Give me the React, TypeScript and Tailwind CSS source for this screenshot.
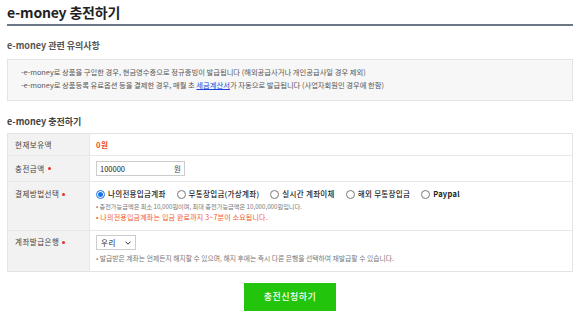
import React from "react";

const font = { fontFamily: "'Noto Sans CJK KR', 'Noto Sans', sans-serif" };

function Radio({ checked, label, bold }: { checked?: boolean; label: string; bold?: boolean }) {
  return (
    <label className="flex items-center gap-[3px]">
      {checked ? (
        <span className="flex h-[9px] w-[9px] items-center justify-center rounded-full border border-[#1a73e8] bg-white">
          <span className="h-[5px] w-[5px] rounded-full bg-[#1a73e8]" />
        </span>
      ) : (
        <span className="h-[9px] w-[9px] rounded-full border border-[#777] bg-white" />
      )}
      <span className={`text-[7.5px] tracking-[0.3px] text-[#222] ${bold ? "font-bold" : "font-medium"}`}>{label}</span>
    </label>
  );
}

function Req() {
  return <span className="ml-[3px] inline-block h-[3px] w-[3px] rounded-full bg-[#e8322a] align-middle" />;
}

export default function App() {
  return (
    <div className="h-[316px] w-[580px] bg-white px-[7px] pt-[3px]" style={font}>
      <div className="border-b-2 border-[#6b7686] pb-[2px]">
        <h1 className="text-[14px] font-bold leading-[19px] tracking-[-0.2px] text-[#222]">e-money 충전하기</h1>
      </div>

      <h2 className="mt-[14px] text-[9px] font-bold leading-[12px] text-[#555]">e-money 관련 유의사항</h2>
      <div className="mt-[7px] border border-[#e3e3e3] bg-[#f7f7f7] pl-[13px] pb-[8px] pt-[6px] text-[7.3px] leading-[13px] text-[#555]">
        <p>-e-money로 상품을 구입한 경우, 현금영수증으로 정규증빙이 발급됩니다 (해외공급사거나 개인공급사일 경우 제외)</p>
        <p>
          -e-money로 상품등록 유료옵션 등을 결제한 경우, 매월 초 <span className="text-[#2343d8] underline">세금계산서</span>가 자동으로 발급됩니다 (사업자회원인 경우에 한함)
        </p>
      </div>

      <h2 className="mt-[15px] text-[9px] font-bold leading-[12px] text-[#444]">e-money 충전하기</h2>
      <div className="mt-[5px] grid grid-cols-[82px_1fr] border border-[#e3e3e3] text-[7.5px] tracking-[0.5px] text-[#444]">
        <div className="flex h-[22px] items-center border-b border-r border-[#e8e8e8] bg-[#f2f2f2] pl-[7px]">현재보유액</div>
        <div className="flex h-[22px] items-center border-b border-[#e8e8e8] pl-[6px] font-bold text-[#f04a1d]">0원</div>

        <div className="flex h-[26px] items-center border-b border-r border-[#e8e8e8] bg-[#f2f2f2] pl-[7px]">
          충전금액<Req />
        </div>
        <div className="flex h-[26px] items-center border-b border-[#e8e8e8] pl-[6px]">
          <div className="flex h-[15px] w-[89px] items-center justify-between border border-[#ccc] px-[3px] text-[7.5px] tracking-normal text-[#222]">
            <span>100000</span>
            <span className="text-[#444]">원</span>
          </div>
        </div>

        <div className="h-[49px] border-b border-r border-[#e8e8e8] bg-[#f2f2f2] pl-[7px] pt-[6px] leading-[12px]">
          결제방법선택<Req />
        </div>
        <div className="h-[49px] border-b border-[#e8e8e8] pl-[6px] pt-[6px]">
          <div className="flex h-[12px] items-center gap-[11px]">
            <Radio checked label="나의전용입금계좌" />
            <Radio label="무통장입금(가상계좌)" />
            <Radio label="실시간 계좌이체" />
            <Radio label="해외 무통장입금" />
            <Radio label="Paypal" bold />
          </div>
          <p className="mt-[1px] text-[6.2px] leading-[11px] tracking-normal text-[#777]">• 충전가능금액은 최소 10,000원이며, 최대 충전가능금액은 10,000,000원입니다.</p>
          <p className="text-[7px] leading-[11px] tracking-[0.2px] text-[#f25a2a]">• 나의전용입금계좌는 입금 완료까지 3~7분이 소요됩니다.</p>
        </div>

        <div className="h-[40px] border-r border-[#e8e8e8] bg-[#f2f2f2] pl-[7px] pt-[5px] leading-[12px]">
          계좌발급은행<Req />
        </div>
        <div className="h-[40px] pl-[6px] pt-[4px]">
          <div className="flex h-[15px] w-[40px] items-center justify-between border border-[#ccc] px-[4px] text-[7.5px] text-[#222]">
            <span>우리</span>
            <svg width="6" height="4" viewBox="0 0 6 4"><path d="M0.5 0.8 L3 3.2 L5.5 0.8" fill="none" stroke="#333" strokeWidth="1" /></svg>
          </div>
          <p className="mt-[3px] text-[6.8px] leading-[11px] tracking-normal text-[#777]">• 발급받은 계좌는 언제든지 해지할 수 있으며, 해지 후에는 즉시 다른 은행을 선택하여 재발급할 수 있습니다.</p>
        </div>
      </div>

      <div className="mt-[11px] flex justify-center">
        <button className="h-[28px] w-[92px] bg-[#22c40c] text-[9px] font-medium tracking-[0.5px] text-white">충전신청하기</button>
      </div>
    </div>
  );
}
